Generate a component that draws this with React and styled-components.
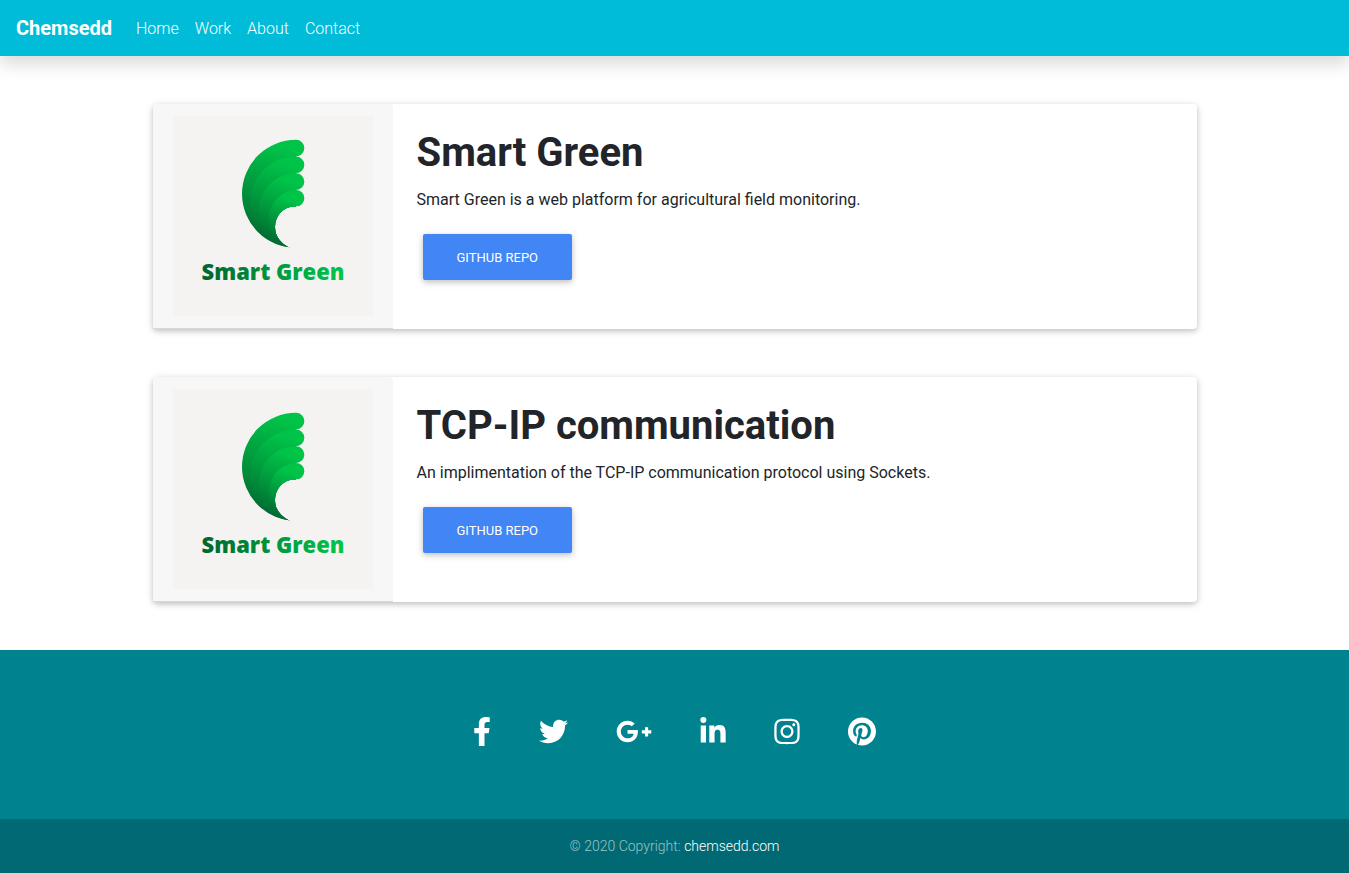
import React, { useId } from "react";
import styled, { createGlobalStyle } from "styled-components";
import {
  FaFacebookF,
  FaTwitter,
  FaGooglePlusG,
  FaLinkedinIn,
  FaInstagram,
  FaPinterest,
} from "react-icons/fa";

const GlobalStyle = createGlobalStyle`
  *, *::before, *::after { box-sizing: border-box; }
  body {
    margin: 0;
    background: #fff;
    color: #212529;
    font-family: Roboto, "Liberation Sans", sans-serif;
    font-size: 16px;
    line-height: 24px;
  }
  a { color: inherit; text-decoration: none; }
`;

const Page = styled.div`
  display: flex;
  flex-direction: column;
  min-height: 100vh;
`;

const Navbar = styled.nav`
  display: flex;
  align-items: center;
  gap: 16px;
  height: 56px;
  padding: 0 16px;
  background: #00bcd8;
  color: #fff;
  box-shadow: 0 8px 16px rgba(0, 0, 0, 0.15);
`;

const Brand = styled.a`
  font-size: 20px;
  font-weight: 700;
`;

const NavList = styled.ul`
  display: flex;
  margin: 0;
  padding: 0;
  list-style: none;
`;

const NavLink = styled.a`
  display: block;
  padding: 9px 8px 7px;
  font-weight: 300;
`;

const Projects = styled.main`
  display: flex;
  flex-direction: column;
  gap: 48px;
  width: 100%;
  max-width: 1140px;
  margin: 0 auto;
  padding: 48px;
`;

const Card = styled.article`
  display: flex;
  border-radius: 4px;
  background: #fff;
  box-shadow: 0 2px 5px rgba(0, 0, 0, 0.16), 0 2px 10px rgba(0, 0, 0, 0.12);
`;

const CardMedia = styled.div`
  flex: none;
  padding: 12px 20px;
  border-bottom: 1px solid rgba(0, 0, 0, 0.125);
  border-radius: 4px 4px 0 0;
  background: #f7f7f7;
`;

const Logo = styled.svg`
  display: block;
  width: 200px;
  height: 200px;
  background: #f5f3f2;
`;

const CardBody = styled.div`
  padding: 25px 24px 24px;
`;

const Title = styled.h1`
  margin: 0 0 11px;
  font-size: 40px;
  font-weight: 700;
  line-height: 48px;
`;

const Description = styled.p`
  margin: 0 0 16px;
`;

const RepoButton = styled.button`
  margin: 6px;
  padding: 15px 34px 13px;
  border: 0;
  border-radius: 2px;
  background: #4285f4;
  color: #fff;
  font: 400 13px/18px Roboto, "Liberation Sans", sans-serif;
  text-transform: uppercase;
  cursor: pointer;
  box-shadow: 0 2px 5px rgba(0, 0, 0, 0.16), 0 2px 10px rgba(0, 0, 0, 0.12);
`;

const Footer = styled.footer`
  display: flex;
  flex: 1;
  flex-direction: column;
  background: #00838f;
  color: #fff;
`;

const SocialRow = styled.div`
  display: flex;
  flex: 1;
  align-items: center;
  justify-content: center;
  gap: 48px;
  padding: 65px 16px 71px;
`;

const SocialLink = styled.a`
  display: block;

  svg {
    display: block;
    width: ${({ $width }) => $width}px;
    height: 29px;
  }
`;

const Copyright = styled.div`
  padding: 15px;
  background: #006974;
  color: rgba(255, 255, 255, 0.6);
  font-size: 14px;
  font-weight: 300;
  text-align: center;

  a { color: #fff; }
`;

const navItems = ["Home", "Work", "About", "Contact"];

const projects = [
  {
    title: "Smart Green",
    text: "Smart Green is a web platform for agricultural field monitoring.",
  },
  {
    title: "TCP-IP communication",
    text: "An implimentation of the TCP-IP communication protocol using Sockets.",
  },
];

const socials = [
  { name: "Facebook", Icon: FaFacebookF, width: 18 },
  { name: "Twitter", Icon: FaTwitter, width: 29 },
  { name: "Google Plus", Icon: FaGooglePlusG, width: 36 },
  { name: "LinkedIn", Icon: FaLinkedinIn, width: 26 },
  { name: "Instagram", Icon: FaInstagram, width: 26 },
  { name: "Pinterest", Icon: FaPinterest, width: 28 },
];

// Nested round feathers that share their lowest point; each has a rounded tip.
const feathers = [
  "M123 23.8A54 54 0 0 0 123 131.8V40.5A8.3 8.3 0 0 0 123 23.8Z",
  "M123 40.5A45.6 45.6 0 0 0 123 131.8V57.2A8.3 8.3 0 0 0 123 40.5Z",
  "M123 57.2A37.3 37.3 0 0 0 123 131.8V73.9A8.3 8.3 0 0 0 123 57.2Z",
  "M123 73.9A29 29 0 0 0 123 131.8V90.6A8.3 8.3 0 0 0 123 73.9Z",
];

function SmartGreenLogo() {
  const id = useId();
  return (
    <Logo viewBox="0 0 200 200" role="img" aria-label="Smart Green logo">
      <defs>
        {feathers.map((_, i) => (
          <linearGradient
            key={i}
            id={`${id}f${i}`}
            gradientUnits="userSpaceOnUse"
            x1="118"
            y1={32 + i * 17}
            x2={92 + i * 3}
            y2="130"
          >
            <stop offset="0" stopColor="#00c448" />
            <stop offset="1" stopColor="#006630" />
          </linearGradient>
        ))}
        <linearGradient id={`${id}t`}>
          <stop offset="0" stopColor="#00642e" />
          <stop offset="1" stopColor="#00c84b" />
        </linearGradient>
        <clipPath id={`${id}c`}>
          <path d="M60 16H140V90.6H121C110 91 102 100 102 111C102 120 107 127 117 132V136H60Z" />
        </clipPath>
      </defs>
      <g clipPath={`url(#${id}c)`}>
        {feathers.map((d, i) => (
          <path key={i} d={d} fill={`url(#${id}f${i})`} />
        ))}
      </g>
      <text
        x="100"
        y="164"
        textAnchor="middle"
        fontFamily='"Open Sans", sans-serif'
        fontSize="22"
        fontWeight="800"
        fill={`url(#${id}t)`}
      >
        Smart Green
      </text>
    </Logo>
  );
}

export default function App() {
  return (
    <Page>
      <GlobalStyle />
      <Navbar>
        <Brand href="#">Chemsedd</Brand>
        <NavList>
          {navItems.map((item) => (
            <li key={item}>
              <NavLink href="#">{item}</NavLink>
            </li>
          ))}
        </NavList>
      </Navbar>
      <Projects>
        {projects.map(({ title, text }) => (
          <Card key={title}>
            <CardMedia>
              <SmartGreenLogo />
            </CardMedia>
            <CardBody>
              <Title>{title}</Title>
              <Description>{text}</Description>
              <RepoButton type="button">Github Repo</RepoButton>
            </CardBody>
          </Card>
        ))}
      </Projects>
      <Footer>
        <SocialRow>
          {socials.map(({ name, Icon, width }) => (
            <SocialLink key={name} href="#" aria-label={name} $width={width}>
              <Icon />
            </SocialLink>
          ))}
        </SocialRow>
        <Copyright>
          © 2020 Copyright: <a href="#">chemsedd.com</a>
        </Copyright>
      </Footer>
    </Page>
  );
}
